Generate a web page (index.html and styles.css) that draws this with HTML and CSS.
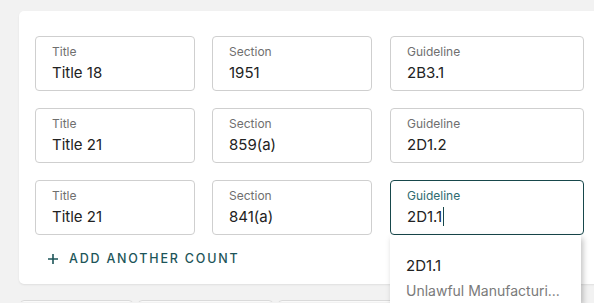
FILE: index.html
```html
<!DOCTYPE html>
<html lang="en">
<head>
  <meta charset="UTF-8">
  <title>Counts</title>
  <link rel="stylesheet" href="styles.css">
</head>
<body>
  <div class="card">
    <div class="counts">
      <div class="field"><span class="label">Title</span><span class="value">Title 18</span></div>
      <div class="field"><span class="label">Section</span><span class="value">1951</span></div>
      <div class="field"><span class="label">Guideline</span><span class="value">2B3.1</span></div>

      <div class="field"><span class="label">Title</span><span class="value">Title 21</span></div>
      <div class="field"><span class="label">Section</span><span class="value">859(a)</span></div>
      <div class="field"><span class="label">Guideline</span><span class="value">2D1.2</span></div>

      <div class="field"><span class="label">Title</span><span class="value">Title 21</span></div>
      <div class="field"><span class="label">Section</span><span class="value">841(a)</span></div>
      <div class="field focused">
        <span class="label">Guideline</span><span class="value">2D1.1<span class="caret"></span></span>
        <div class="menu">
          <div class="option">
            <div class="option-code">2D1.1</div>
            <div class="option-desc">Unlawful Manufacturi...</div>
          </div>
        </div>
      </div>
    </div>
    <button class="add-count">
      <svg width="12" height="12" viewBox="0 0 12 12"><path d="M6 1v10M1 6h10" stroke="currentColor" stroke-width="1.6" fill="none"/></svg>
      ADD ANOTHER COUNT
    </button>
  </div>
  <div class="footer-row">
    <div class="stub s1"></div>
    <div class="stub s2"></div>
    <div class="stub s3"></div>
  </div>
</body>
</html>
```
FILE: styles.css
```css
body {
  margin: 0;
  background: #f2f2f2;
  font-family: Inter, "Open Sans", sans-serif;
  overflow: hidden;
  height: 303px;
}

.card {
  margin: 11px 0 0 19px;
  width: 600px;
  background: #fff;
  border-radius: 5px;
  box-shadow: 0 1px 2px rgba(0, 0, 0, 0.08);
  padding: 25px 16px 16px 16px;
  box-sizing: border-box;
  height: 273px;
}

.counts {
  display: grid;
  grid-template-columns: 160px 160px 193px;
  column-gap: 17px;
  row-gap: 17px;
}

.counts .field:nth-child(3n) {
  margin-left: 1px;
  width: 194px;
}

.field {
  position: relative;
  height: 55px;
  box-sizing: border-box;
  border: 1px solid #cfcfcf;
  border-radius: 4px;
  padding: 7px 16px 0 16px;
  display: flex;
  flex-direction: column;
}

.label {
  font-size: 12px;
  color: #6f6f6f;
  line-height: 16px;
}

.value {
  font-size: 15px;
  color: #222;
  line-height: 22px;
  margin-top: 2px;
}

.focused {
  border-color: #17474b;
}

.focused .label {
  color: #2f6b70;
}

.caret {
  display: inline-block;
  width: 1px;
  height: 19px;
  background: #17474b;
  vertical-align: -4px;
  margin-left: 1px;
}

.menu {
  position: absolute;
  left: -1px;
  top: 54px;
  width: 191px;
  background: #fff;
  box-shadow: 2px 3px 6px rgba(0, 0, 0, 0.25);
  z-index: 2;
  padding: 21px 16px 0 16px;
  box-sizing: border-box;
  height: 68px;
}

.option-code {
  font-size: 15px;
  color: #222;
  line-height: 20px;
}

.option-desc {
  font-size: 14px;
  color: #7a7a7a;
  line-height: 20px;
  margin-top: 5px;
  white-space: nowrap;
}

.add-count {
  display: flex;
  align-items: center;
  gap: 10px;
  margin-top: 16px;
  margin-left: 12px;
  background: none;
  border: none;
  padding: 0;
  font-family: inherit;
  font-size: 12.5px;
  font-weight: 500;
  letter-spacing: 1.8px;
  color: #1d5559;
  cursor: pointer;
}

.footer-row {
  display: flex;
  gap: 5px;
  margin: 16px 0 0 20px;
  height: 2px;
  overflow: hidden;
}

.stub {
  height: 20px;
  border: 1px solid #dadada;
  border-radius: 4px;
  background: #fafafa;
}

.s1 { width: 111px; }
.s2 { width: 133px; }
.s3 { width: 300px; }
```
